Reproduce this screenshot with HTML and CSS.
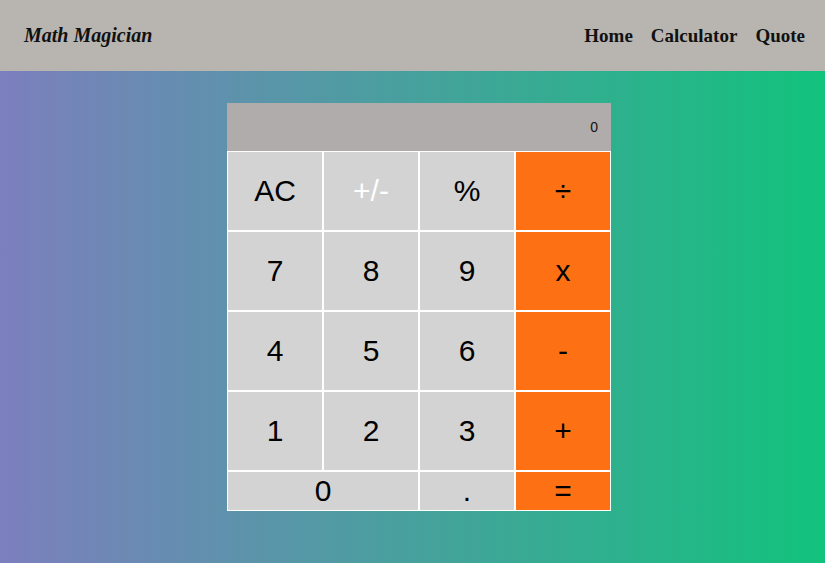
FILE: index.html
```html
<!DOCTYPE html>
<html lang="en">
<head>
<meta charset="utf-8">
<title>Math Magician</title>
<link rel="stylesheet" href="styles.css">
</head>
<body>
<header class="topbar">
  <h1 class="brand">Math Magician</h1>
  <nav class="nav">
    <a class="nav-link" href="#">Home</a>
    <a class="nav-link" href="#">Calculator</a>
    <a class="nav-link" href="#">Quote</a>
  </nav>
</header>
<main class="stage">
  <div class="calc">
    <div class="display">0</div>
    <button class="key">AC</button>
    <button class="key key-white">+/-</button>
    <button class="key">%</button>
    <button class="key op">÷</button>
    <button class="key">7</button>
    <button class="key">8</button>
    <button class="key">9</button>
    <button class="key op">x</button>
    <button class="key">4</button>
    <button class="key">5</button>
    <button class="key">6</button>
    <button class="key op">-</button>
    <button class="key">1</button>
    <button class="key">2</button>
    <button class="key">3</button>
    <button class="key op">+</button>
    <button class="key wide">0</button>
    <button class="key">.</button>
    <button class="key op">=</button>
  </div>
</main>
</body>
</html>
```
FILE: styles.css
```css
html, body {
  margin: 0;
  padding: 0;
  height: 100%;
}
body {
  background: linear-gradient(90deg, #7c7fbe 0%, #12c27c 100%);
  font-family: "Liberation Serif", "Times New Roman", serif;
  min-height: 100vh;
}
.topbar {
  height: 71px;
  background: #b8b5b0;
  display: flex;
  align-items: center;
  justify-content: space-between;
  padding: 0 20px 0 24px;
  box-sizing: border-box;
}
.brand {
  margin: 0;
  font-size: 20px;
  font-weight: bold;
  font-style: italic;
  color: #111;
}
.nav {
  display: flex;
  gap: 18px;
}
.nav-link {
  color: #111;
  text-decoration: none;
  font-weight: bold;
  font-size: 19px;
}
.stage {
  display: flex;
  justify-content: center;
  padding: 32px 0 0 13px;
}
.calc {
  width: 384px;
  display: grid;
  grid-template-columns: repeat(4, 96px);
  grid-template-rows: 48px repeat(4, 80px) 40px;
}
.display {
  grid-column: 1 / -1;
  background: #b0acab;
  display: flex;
  align-items: center;
  justify-content: flex-end;
  padding-right: 13px;
  font-family: "Liberation Sans", Arial, sans-serif;
  font-size: 14px;
  color: #111;
}
.key {
  margin: 0;
  border: 1px solid #fff;
  background: #d3d3d3;
  font-family: "Liberation Sans", Arial, sans-serif;
  font-size: 30px;
  color: #000;
  padding: 0;
  cursor: pointer;
}
.key-white {
  color: #fff;
}
.op {
  background: #fe7014;
}
.wide {
  grid-column: span 2;
}
```
